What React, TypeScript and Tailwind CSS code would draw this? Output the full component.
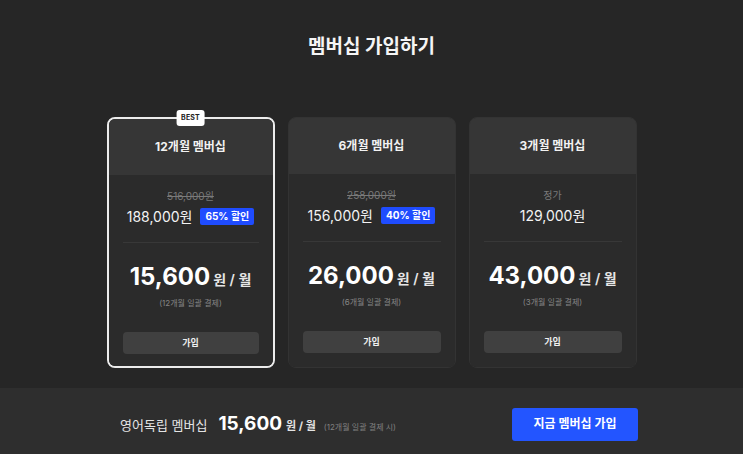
import React from 'react';

interface Plan {
  title: string;
  original?: string;
  price: string;
  discount?: string;
  monthly: string;
  note: string;
  best?: boolean;
}

const plans: Plan[] = [
  { title: '12개월 멤버십', original: '516,000원', price: '188,000원', discount: '65% 할인', monthly: '15,600', note: '(12개월 일괄 결제)', best: true },
  { title: '6개월 멤버십', original: '258,000원', price: '156,000원', discount: '40% 할인', monthly: '26,000', note: '(6개월 일괄 결제)' },
  { title: '3개월 멤버십', price: '129,000원', monthly: '43,000', note: '(3개월 일괄 결제)' },
];

function PlanCard({ plan }: { plan: Plan }) {
  return (
    <div
      className={`relative w-[168px] h-[251px] rounded-[8px] flex flex-col ${
        plan.best ? 'border-2 border-[#ececec]' : 'border border-[#333333]'
      }`}
    >
      {plan.best && (
        <div className="absolute left-1/2 -translate-x-1/2 -top-[9px] h-[16px] px-[5px] bg-white rounded-[3px] flex items-center text-[7px] font-bold text-[#222] tracking-wide">
          BEST
        </div>
      )}
      <div className="h-[56px] shrink-0 bg-[#363636] rounded-t-[6px] flex items-center justify-center text-[12px] font-bold text-[#f2f2f2]">
        {plan.title}
      </div>
      <div className="flex-1 bg-[#2b2b2b] rounded-b-[6px] flex flex-col items-stretch px-[14px] pt-[14px] pb-[8px]">
        <div className="h-[14px] flex items-center justify-center text-[10px] text-[#7a7a7a]">
          {plan.original ? <span className="line-through">{plan.original}</span> : <span>정가</span>}
        </div>
        <div className="h-[20px] mt-[3px] flex items-center justify-center gap-[8px]">
          <span className="text-[14px] text-[#f3f3f3]">{plan.price}</span>
          {plan.discount && (
            <span className="h-[17px] px-[5px] rounded-[2px] bg-[#1f4cff] text-white text-[10px] font-bold flex items-center">
              {plan.discount}
            </span>
          )}
        </div>
        <div className="mt-[16px] h-px bg-[#383838]" />
        <div className="mt-[18px] h-[32px] flex items-baseline justify-center gap-[3px]">
          <span className="text-[24px] font-bold text-white leading-[32px]">{plan.monthly}</span>
          <span className="text-[14px] font-semibold text-[#e6e6e6]">원 / 월</span>
        </div>
        <div className="mt-[4px] h-[12px] flex items-center justify-center text-[8px] text-[#858585]">{plan.note}</div>
        <button className="mt-[23px] h-[22px] shrink-0 rounded-[4px] bg-[#404040] text-[9px] font-bold text-[#f0f0f0]">가입</button>
      </div>
    </div>
  );
}

export default function App() {
  return (
    <div
      className="w-[743px] h-[454px] bg-[#262626] flex flex-col overflow-hidden"
      style={{ fontFamily: 'Inter, "Noto Sans CJK KR", sans-serif' }}
    >
      <div className="h-[117px] shrink-0 flex justify-center pt-[33px]">
        <h1 className="text-[19px] font-bold text-[#f5f5f5] leading-[28px]">멤버십 가입하기</h1>
      </div>
      <div className="flex justify-center gap-[13px]">
        {plans.map((p) => (
          <PlanCard key={p.title} plan={p} />
        ))}
      </div>
      <div className="mt-auto h-[66px] bg-[#2e2e2e] flex items-center pt-[6px] pl-[120px] pr-[105px]">
        <div className="flex items-baseline">
          <span className="text-[13px] text-[#e4e4e4]">영어독립 멤버십</span>
          <span className="ml-[11px] text-[19px] font-bold text-white">15,600</span>
          <span className="ml-[4px] text-[11px] font-bold text-[#e4e4e4]">원 / 월</span>
          <span className="ml-[8px] text-[8px] text-[#808080]">(12개월 일괄 결제 시)</span>
        </div>
        <button className="ml-auto w-[126px] h-[33px] rounded-[3px] bg-[#2355ff] text-white text-[12px] font-bold">
          지금 멤버십 가입
        </button>
      </div>
    </div>
  );
}
